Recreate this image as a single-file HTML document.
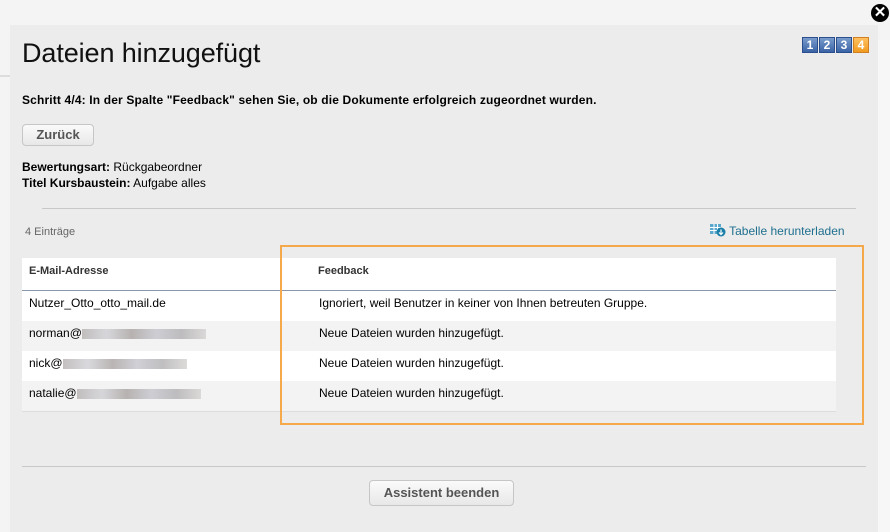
<!DOCTYPE html>
<html><head><meta charset="utf-8"><style>
body{margin:0;width:890px;height:532px;background:#f4f4f4;font-family:"Liberation Sans",Arial,sans-serif;position:relative;overflow:hidden;color:#000}
.modal{position:absolute;left:10px;top:25px;width:868px;height:507px;background:#ececec}
.abs{position:absolute}
h1{position:absolute;left:22px;top:38px;margin:0;font-size:27px;font-weight:normal;color:#111;letter-spacing:-0.1px}
.btn{position:absolute;border:1px solid #c6c6c6;border-radius:4px;background:linear-gradient(#fafafa,#e8e8e8);color:#555;font-weight:bold;font-size:13px;text-align:center;box-sizing:border-box}
.tbl{position:absolute;left:22px;top:258px;width:814px;font-size:12px}
.row{position:absolute;left:0;width:814px;height:30px;line-height:25px}
.row span{position:absolute}
.blur{display:inline-block;height:10px;vertical-align:middle;background:linear-gradient(90deg,#b5b0b0,#cfcfd4,#a8a2a0,#c4c4cc,#b0aeb0,#d4d2d0);opacity:.8}
.num{display:inline-block;width:14px;height:14px;border:1px solid #2a4f8c;background:linear-gradient(#7a9ccc,#3b64a6);color:#fff;font-weight:bold;font-size:12px;line-height:14px;text-align:center;margin-left:1px}
</style></head><body>
<div class="abs" style="left:0;top:75px;width:10px;height:2px;background:#ddd"></div>
<div class="modal"></div>
<div class="abs" style="left:878px;top:40px;width:12px;height:492px;background:#f7f7f7"></div>
<div class="abs" style="left:871px;top:4px;width:18px;height:18px;border-radius:50%;background:#000;color:#fff;font-size:15px;font-weight:bold;line-height:18px;text-align:center">✕</div>
<div class="abs" style="left:801px;top:37px;font-size:0"><span class="num">1</span><span class="num">2</span><span class="num">3</span><span class="num" style="background:linear-gradient(#ffc060,#f09a20);border-color:#d08020">4</span></div>
<h1>Dateien hinzugefügt</h1>
<div class="abs" style="left:22px;top:93px;font-size:12px;font-weight:bold;letter-spacing:0.15px">Schritt 4/4: In der Spalte "Feedback" sehen Sie, ob die Dokumente erfolgreich zugeordnet wurden.</div>
<div class="btn" style="left:22px;top:124px;width:72px;height:22px;line-height:20px">Zurück</div>
<div class="abs" style="left:22px;top:159px;font-size:12px;line-height:16px"><b>Bewertungsart:</b> Rückgabeordner<br><b>Titel Kursbaustein:</b> Aufgabe alles</div>
<div class="abs" style="left:42px;top:208px;width:814px;height:1px;background:#c8c8c8"></div>
<div class="abs" style="left:25px;top:226px;font-size:11px;color:#666">4 Einträge</div>
<div class="abs" style="left:710px;top:223px;font-size:12px;color:#1f6f8f">
<svg width="16" height="14" viewBox="0 0 16 14" style="vertical-align:-2px"><rect x="0" y="1" width="11" height="10" fill="#5aa9cc"/><path d="M0 4.5H11M0 7.5H11M4 1V11M7.5 1V11" stroke="#fff" stroke-width="1"/><circle cx="11" cy="9" r="4.5" fill="#1a7fa8"/><path d="M11 6.5V11M9 9.5L11 11.5L13 9.5" stroke="#fff" stroke-width="1.2" fill="none"/></svg> Tabelle herunterladen</div>
<div class="tbl">
<div class="row" style="top:0;height:32px;line-height:26px;background:#fff;border-bottom:1px solid #8a97a8;font-size:11px;font-weight:bold;color:#333"><span style="left:7px">E-Mail-Adresse</span><span style="left:296px">Feedback</span></div>
<div class="row" style="top:33px;background:#fff"><span style="left:7px">Nutzer_Otto_otto_mail.de</span><span style="left:297px">Ignoriert, weil Benutzer in keiner von Ihnen betreuten Gruppe.</span></div>
<div class="row" style="top:63px;background:#f3f3f3"><span style="left:7px">norman@<i class="blur" style="width:124px"></i></span><span style="left:297px">Neue Dateien wurden hinzugefügt.</span></div>
<div class="row" style="top:93px;background:#fff"><span style="left:7px">nick@<i class="blur" style="width:124px"></i></span><span style="left:297px">Neue Dateien wurden hinzugefügt.</span></div>
<div class="row" style="top:123px;background:#f3f3f3;border-bottom:1px solid #ddd"><span style="left:7px">natalie@<i class="blur" style="width:124px"></i></span><span style="left:297px">Neue Dateien wurden hinzugefügt.</span></div>
</div>
<div class="abs" style="left:280px;top:245px;width:580px;height:176px;border:2px solid #f5a94a"></div>
<div class="abs" style="left:22px;top:466px;width:844px;height:1px;background:#c8c8c8"></div>
<div class="btn" style="left:369px;top:480px;width:145px;height:26px;line-height:24px">Assistent beenden</div>
</body></html>
